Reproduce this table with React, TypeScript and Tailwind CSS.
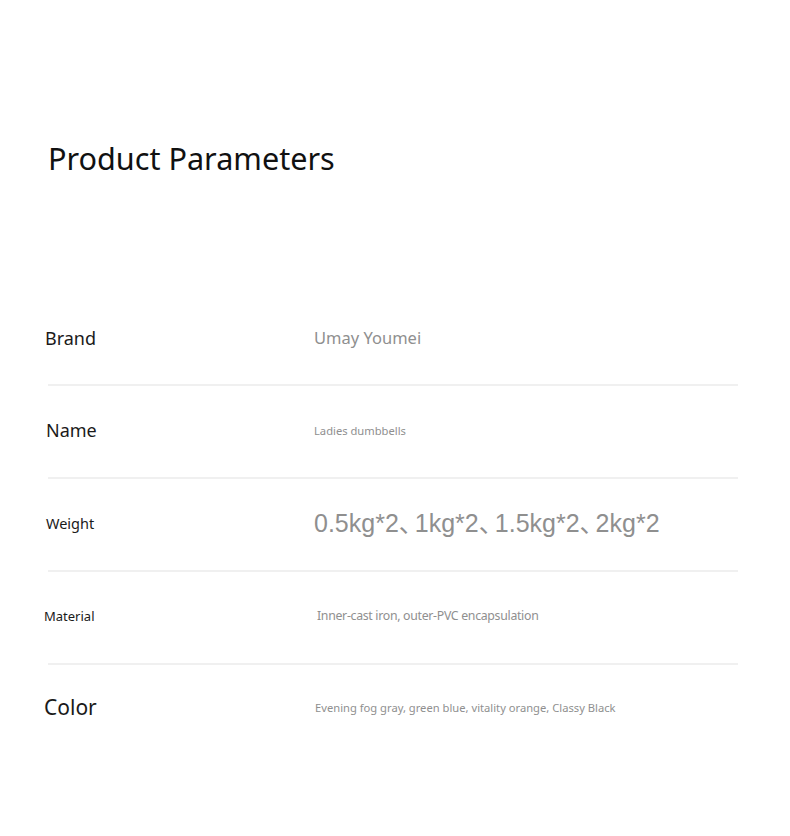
import React from "react";

const Comma = () => <span className="tracking-[-9px]">、</span>;

const rows: { label: string; labelCls: string; value: React.ReactNode; valueCls: string }[] = [
  {
    label: "Brand",
    labelCls: "text-[18px] pl-[45px] pb-[1px]",
    value: "Umay Youmei",
    valueCls: "text-[16.5px] text-[#8f8f8f] pl-[314px]",
  },
  {
    label: "Name",
    labelCls: "text-[18px] pl-[46px] pb-[2px]",
    value: "Ladies dumbbells",
    valueCls: "text-[11.2px] text-[#8f8f8f] pl-[314px]",
  },
  {
    label: "Weight",
    labelCls: "text-[14.5px] pl-[46px] pb-[2px]",
    value: (
      <>
        0.5kg*2<Comma />1kg*2<Comma />1.5kg*2<Comma />2kg*2
      </>
    ),
    valueCls: "text-[25px] text-[#8f8f8f] pl-[314px] pb-[2px] [font-family:'Liberation_Sans','Noto_Sans_CJK_SC',sans-serif]",
  },
  {
    label: "Material",
    labelCls: "text-[13px] pl-[44px] pb-[2px]",
    value: "Inner-cast iron, outer-PVC encapsulation",
    valueCls: "text-[12.3px] text-[#8f8f8f] pl-[317px] pb-[2px] tracking-[-0.3px]",
  },
  {
    label: "Color",
    labelCls: "text-[21px] pl-[44px] pb-[5px]",
    value: "Evening fog gray, green blue, vitality orange, Classy Black",
    valueCls: "text-[11.2px] text-[#8f8f8f] pl-[315px] pb-[5px]",
  },
];

export default function App() {
  return (
    <div className="w-[790px] h-[836px] bg-white text-[#1a1a1a] [font-family:'Noto_Sans',sans-serif] overflow-hidden">
      <div className="pt-[136px] pl-[48px] h-[293px]">
        <h1 className="text-[30.6px] leading-[44px] font-normal text-[#111]">Product Parameters</h1>
      </div>
      {rows.map((r, i) => (
        <div key={r.label}>
          <div className="relative h-[91px]">
            <div className={`absolute left-0 top-0 h-full flex items-center ${r.labelCls}`}>{r.label}</div>
            <div className={`absolute left-0 top-0 h-full flex items-center whitespace-nowrap ${r.valueCls}`}>{r.value}</div>
          </div>
          {i < rows.length - 1 && <div className="ml-[48px] w-[690px] h-[2px] bg-[#f0f0f0]" />}
        </div>
      ))}
    </div>
  );
}
